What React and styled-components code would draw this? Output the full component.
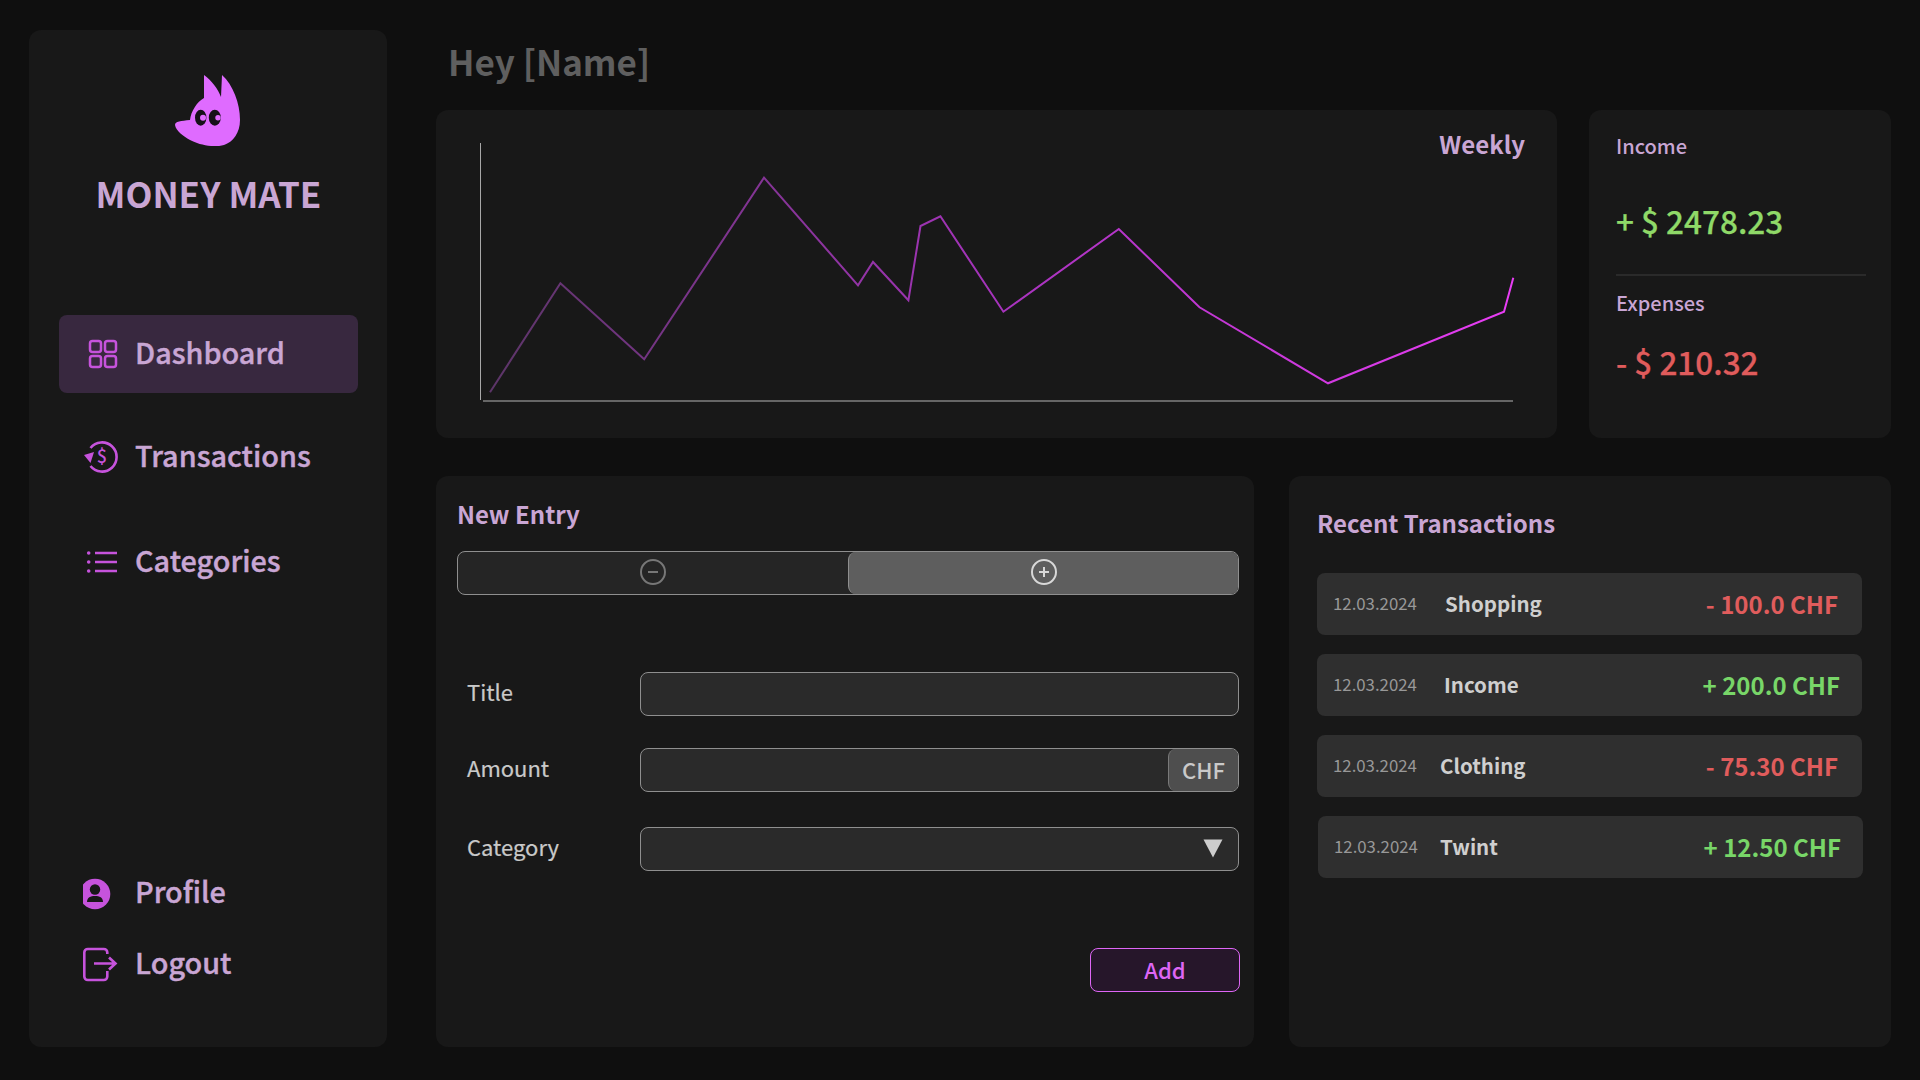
import React from "react";
import styled, { createGlobalStyle } from "styled-components";

const Global = createGlobalStyle`
  html, body { margin: 0; padding: 0; background: #0f0f0f; }
  * { box-sizing: border-box; }
  body { font-family: "Noto Sans CJK JP", "Noto Sans", sans-serif; }
`;

const Page = styled.div`
  width: 1920px; height: 1080px; padding: 30px 30px 33px 29px;
  display: flex; gap: 49px; background: #0f0f0f; overflow: hidden;
`;
const Sidebar = styled.aside`
  width: 358px; height: 1017px; flex: none; background: #181818; border-radius: 12px;
  padding: 45px 29px 53px 30px; display: flex; flex-direction: column;
`;
const LogoMark = styled.svg`
  width: 65px; height: 71px; align-self: center; margin-left: -3px; display: block; flex: none;
`;
const Brand = styled.div`
  margin-top: 22px; height: 50px; line-height: 50px; text-align: center;
  font-size: 35px; font-weight: 700; color: #c9a6d4; white-space: nowrap;
`;
const NavList = styled.nav`
  display: flex; flex-direction: column; gap: 25px; margin-top: 97px;
`;
const BottomList = styled.nav`
  display: flex; flex-direction: column; gap: 11px; margin-top: auto;
`;
const NavItem = styled.a`
  display: flex; align-items: center; gap: 16px; padding-left: 24px;
  height: ${(p) => p.$h || 78}px; margin-top: ${(p) => p.$mt || 0}px; border-radius: 8px;
  background: ${(p) => (p.$active ? "#38283f" : "transparent")};
  font-size: 28.800px; font-weight: 500; color: #c9a6d4; line-height: 1;
  -webkit-text-stroke: 0.4px #c9a6d4;
`;
const NavLabel = styled.span`
  display: block; padding-bottom: 3px;
`;
const NavIcon = styled.svg`
  width: 36px; height: 36px; flex: none; display: block; color: #c653dc;
`;

const Main = styled.main`
  width: 1455px; flex: none; display: flex; flex-direction: column;
`;
const Greeting = styled.h1`
  margin: 0; height: 80px; padding: 6px 0 0 12px; font-size: 35px; line-height: 50px;
  font-weight: 700; color: #5f5f5f;
`;
const TopRow = styled.section`
  display: grid; grid-template-columns: 1121px 302px; gap: 32px; height: 328px;
`;
const BottomRow = styled.section`
  display: grid; grid-template-columns: 818px 602px; gap: 35px; height: 571px; margin-top: 38px;
`;
const Card = styled.div`
  background: #181818; border-radius: 12px; position: relative;
`;
const ChartSvg = styled.svg`
  display: block; width: 1121px; height: 328px;
`;
const Weekly = styled.div`
  position: absolute; top: 16px; right: 32px; font-size: 24px; line-height: 36px;
  font-weight: 700; color: #c9a6d4;
`;
const StatsCard = styled(Card)`
  padding: 21px 25px 0 27px; display: flex; flex-direction: column;
`;
const StatLabel = styled.div`
  font-size: 20px; line-height: 30px; font-weight: 500; color: #c9a6d4;
`;
const StatValue = styled.div`
  margin-top: ${(p) => p.$mt}px; font-size: 31.500px; line-height: 44px; font-weight: 500;
  color: ${(p) => p.$color}; white-space: nowrap; -webkit-text-stroke: 0.25px ${(p) => p.$color};
`;
const Divider = styled.div`
  height: 2px; background: #2a2a2a; margin: 32px 0 12px 0;
`;

const EntryCard = styled(Card)`
  padding: 20px 15px 0 21px; display: flex; flex-direction: column;
`;
const CardTitle = styled.h2`
  margin: 0; font-size: 24px; line-height: 36px; font-weight: 700; color: #c9a6d4;
`;
const Toggle = styled.div`
  margin-top: 19px; height: 44px; display: grid; grid-template-columns: 390px 390px;
  border: 1px solid #8f8f8f; border-radius: 8px; background: #252525; overflow: hidden;
`;
const ToggleSide = styled.div`
  display: flex; align-items: center; justify-content: center;
  background: ${(p) => (p.$on ? "#5e5e5e" : "transparent")};
  border-left: ${(p) => (p.$on ? "1px solid #8f8f8f" : "none")};
  border-radius: ${(p) => (p.$on ? "8px 0 0 8px" : "0")};
  color: ${(p) => (p.$on ? "#d8d8d8" : "#777777")};
`;
const ToggleIcon = styled.svg`
  width: 26px; height: 26px; display: block; margin-top: -2px;
`;
const FormRow = styled.div`
  display: grid; grid-template-columns: 183px 599px; align-items: center;
  margin-top: ${(p) => p.$mt}px;
`;
const FieldLabel = styled.label`
  padding: 0 0 7px 10px; font-size: 22px; line-height: 32px; color: #c9c9c9;
  -webkit-text-stroke: 0.2px #c9c9c9;
`;
const FieldBox = styled.div`
  height: 44px; display: flex; justify-content: flex-end; align-items: stretch;
  border: 1px solid #8f8f8f; border-radius: 8px; background: #2a2a2a; overflow: hidden;
`;
const FieldInput = styled.input`
  flex: 1; min-width: 0; border: 0; outline: 0; background: transparent; color: #c9c9c9; font: inherit;
`;
const Addon = styled.div`
  width: 70px; flex: none; display: flex; align-items: center; justify-content: center;
  background: #4e4e4e; border-left: 1px solid #7a7a7a; border-radius: 8px 0 0 8px;
  font-size: 22px; font-weight: 500; color: #c9c9c9; padding-bottom: 2px;
`;
const Caret = styled.svg`
  width: 20px; height: 19px; align-self: center; margin-right: 15px; display: block; margin-top: -1px;
`;
const AddButton = styled.button`
  align-self: flex-end; margin: 77px -1px 0 0; width: 150px; height: 44px; padding: 0 0 3px;
  border: 1px solid #de66f5; border-radius: 8px; background: #26162a; color: #de66f5;
  font-family: inherit; font-size: 22px; font-weight: 500; line-height: 1;
`;

const RecentCard = styled(Card)`
  padding: 29px 28px 0 28px; display: flex; flex-direction: column;
`;
const TxList = styled.div`
  margin-top: 32px; display: flex; flex-direction: column; gap: 19px;
`;
const TxRow = styled.div`
  height: 62px; width: 545px; margin-left: ${(p) => p.$shift}px; display: flex; align-items: center;
  padding: 0 ${(p) => p.$pr}px 2px 16px; background: #2f2f2f; border-radius: 8px;
`;
const TxDate = styled.span`
  width: 84px; flex: none; font-size: 16.800px; color: #989898; white-space: nowrap;
`;
const TxName = styled.span`
  margin-left: ${(p) => p.$ml}px; font-size: 20.500px; font-weight: 700; color: #cfcfcf; white-space: nowrap;
`;
const TxAmount = styled.span`
  margin-left: auto; font-size: 24px; font-weight: 700; color: ${(p) => p.$color}; white-space: nowrap;
`;

const pts = [
  [490, 392.3], [560.4, 283.3], [644.2, 359.3], [764, 177.7], [858, 285.3], [873, 262],
  [908.4, 300.3], [920.5, 226], [940.4, 216.3], [1003.4, 311.7], [1118.8, 229],
  [1199.5, 307.3], [1328, 383.3], [1504, 311.7], [1513.3, 277.7],
].map((p) => p.join(",")).join(" ");

const RED = "#e05c5c";
const GREEN = "#78d668";
const txs = [
  { name: "Shopping", ml: 28, amt: "- 100.0 CHF", color: RED, pr: 24, shift: 0 },
  { name: "Income", ml: 27, amt: "+ 200.0 CHF", color: GREEN, pr: 22, shift: 0 },
  { name: "Clothing", ml: 23, amt: "- 75.30 CHF", color: RED, pr: 24, shift: 0 },
  { name: "Twint", ml: 22, amt: "+ 12.50 CHF", color: GREEN, pr: 22, shift: 1 },
];

export default function App() {
  return (
    <Page>
      <Global />
      <Sidebar>
        <LogoMark viewBox="0 0 65 71" aria-label="Money Mate logo">
          <path fill="#df6bff" d="M29 0C37 6 43 14 46 22L47 0C58 10 65 28 65 45C65 58 58 67 49 70C40 73 24 70 15 65C8 61 1 56 0 50C0 46 6 46 15 45C16 36 22 27 29 23Z" />
          <ellipse cx="25.7" cy="42.7" rx="5.700" ry="8" fill="#16101a" />
          <ellipse cx="39.8" cy="42.7" rx="6" ry="8" fill="#16101a" />
          <circle cx="28" cy="42.7" r="3" fill="#df6bff" />
          <circle cx="43" cy="42.7" r="2.700" fill="#df6bff" />
        </LogoMark>
        <Brand>MONEY MATE</Brand>
        <NavList>
          <NavItem $active>
            <NavIcon viewBox="0 0 36 36" fill="none" stroke="currentColor" strokeWidth="2.500">
              <rect x="7" y="5" width="11" height="11" rx="2.500" />
              <rect x="22" y="5" width="11" height="11" rx="2.500" />
              <rect x="7" y="20" width="11" height="11" rx="2.500" />
              <rect x="22" y="20" width="11" height="11" rx="2.500" />
            </NavIcon>
            <NavLabel>Dashboard</NavLabel>
          </NavItem>
          <NavItem>
            <NavIcon viewBox="0 0 36 36" fill="none" stroke="currentColor" strokeWidth="2.600">
              <path d="M7.500 9A14.600 14.600 0 1 1 7.500 27" />
              <path d="M1 16L11 13L7.500 24Z" fill="currentColor" stroke="none" />
              <text x="19" y="24" textAnchor="middle" fontSize="18" fontFamily="'Noto Sans CJK JP', sans-serif" fill="currentColor" stroke="none">$</text>
            </NavIcon>
            <NavLabel>Transactions</NavLabel>
          </NavItem>
          <NavItem $mt={2}>
            <NavIcon viewBox="0 0 36 36" fill="none" stroke="currentColor" strokeWidth="2.600">
              <path d="M12 9H34M12 18H34M12 27H34" />
              <circle cx="5.700" cy="9" r="1.800" fill="currentColor" stroke="none" />
              <circle cx="5.700" cy="18" r="1.800" fill="currentColor" stroke="none" />
              <circle cx="5.700" cy="27" r="1.800" fill="currentColor" stroke="none" />
            </NavIcon>
            <NavLabel>Categories</NavLabel>
          </NavItem>
        </NavList>
        <BottomList>
          <NavItem $h={60}>
            <NavIcon viewBox="0 0 36 36">
              <circle cx="12" cy="19" r="15.300" fill="currentColor" />
              <circle cx="12" cy="14.500" r="5.200" fill="#181818" />
              <path d="M4 27C4 22.500 7.500 21 12 21C16.500 21 20 22.500 20 27Z" fill="#181818" />
            </NavIcon>
            <NavLabel>Profile</NavLabel>
          </NavItem>
          <NavItem $h={60}>
            <NavIcon viewBox="0 0 36 36" fill="none" stroke="currentColor" strokeWidth="2.600">
              <path d="M23 8V6.500A3.500 3.500 0 0 0 19.500 3H3.500A3.500 3.500 0 0 0 0 6.500V30.500A3.500 3.500 0 0 0 3.500 34H19.500A3.500 3.500 0 0 0 23 30.500V25" transform="translate(1.300 0)" />
              <path d="M11 17.500H32M26 11.500L32.500 17.500L26 23.500" />
            </NavIcon>
            <NavLabel>Logout</NavLabel>
          </NavItem>
        </BottomList>
      </Sidebar>

      <Main>
        <Greeting>Hey [Name]</Greeting>
        <TopRow>
          <Card>
            <ChartSvg viewBox="436 110 1121 328">
              <defs>
                <linearGradient id="line" gradientUnits="userSpaceOnUse" x1="490" y1="0" x2="1513" y2="0">
                  <stop offset="0" stopColor="#5c3568" />
                  <stop offset="0.5" stopColor="#a733bd" />
                  <stop offset="1" stopColor="#e93df5" />
                </linearGradient>
              </defs>
              <line x1="480.500" y1="143" x2="480.500" y2="400" stroke="#a8a8a8" strokeWidth="1" />
              <line x1="483" y1="401" x2="1513" y2="401" stroke="#666666" strokeWidth="2" />
              <polyline points={pts} fill="none" stroke="url(#line)" strokeWidth="2" />
            </ChartSvg>
            <Weekly>Weekly</Weekly>
          </Card>
          <StatsCard>
            <StatLabel>Income</StatLabel>
            <StatValue $mt={37} $color="#8fd968">+ $ 2478.23</StatValue>
            <Divider />
            <StatLabel>Expenses</StatLabel>
            <StatValue $mt={21} $color="#e05c5c">- $ 210.32</StatValue>
          </StatsCard>
        </TopRow>
        <BottomRow>
          <EntryCard>
            <CardTitle>New Entry</CardTitle>
            <Toggle>
              <ToggleSide>
                <ToggleIcon viewBox="0 0 26 26" fill="none" stroke="currentColor" strokeWidth="2">
                  <circle cx="13" cy="13" r="12" />
                  <path d="M8 13H18" />
                </ToggleIcon>
              </ToggleSide>
              <ToggleSide $on>
                <ToggleIcon viewBox="0 0 26 26" fill="none" stroke="currentColor" strokeWidth="2">
                  <circle cx="13" cy="13" r="12" />
                  <path d="M8 13H18M13 8V18" />
                </ToggleIcon>
              </ToggleSide>
            </Toggle>
            <FormRow $mt={77}>
              <FieldLabel>Title</FieldLabel>
              <FieldBox><FieldInput aria-label="Title" /></FieldBox>
            </FormRow>
            <FormRow $mt={32}>
              <FieldLabel>Amount</FieldLabel>
              <FieldBox><FieldInput aria-label="Amount" /><Addon>CHF</Addon></FieldBox>
            </FormRow>
            <FormRow $mt={35}>
              <FieldLabel>Category</FieldLabel>
              <FieldBox>
                <Caret viewBox="0 0 20 19"><path d="M0.500 0.500H19.500L10 18.500Z" fill="#cdcdcd" /></Caret>
              </FieldBox>
            </FormRow>
            <AddButton>Add</AddButton>
          </EntryCard>
          <RecentCard>
            <CardTitle>Recent Transactions</CardTitle>
            <TxList>
              {txs.map((t) => (
                <TxRow key={t.name} $pr={t.pr} $shift={t.shift}>
                  <TxDate>12.03.2024</TxDate>
                  <TxName $ml={t.ml}>{t.name}</TxName>
                  <TxAmount $color={t.color}>{t.amt}</TxAmount>
                </TxRow>
              ))}
            </TxList>
          </RecentCard>
        </BottomRow>
      </Main>
    </Page>
  );
}
